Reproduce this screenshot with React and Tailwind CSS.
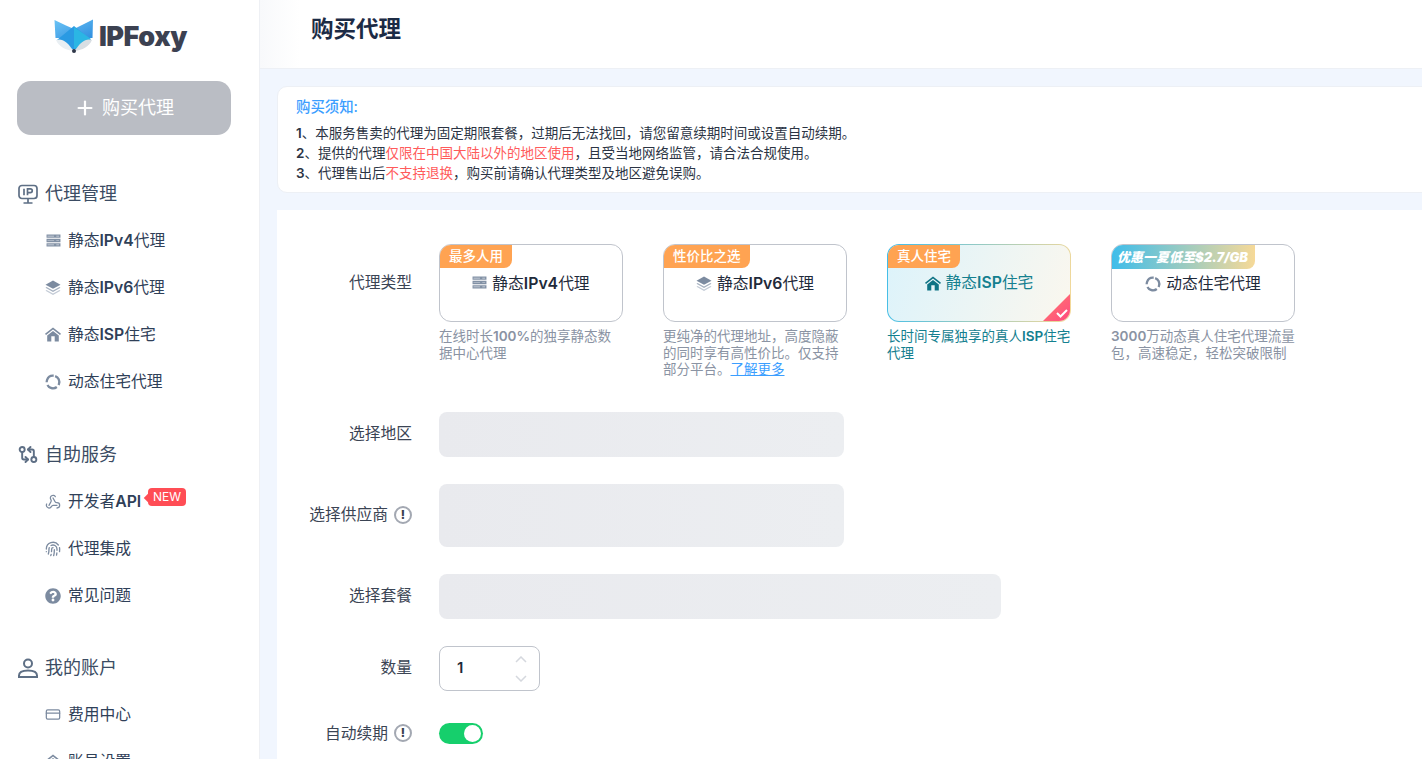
import { CreditCard, Fingerprint, GitCompareArrows, Plus, Webhook } from 'lucide-react'
import { FaQuestionCircle } from 'react-icons/fa'

/* ─── Small drawn icons ──────────────────────────────────────────────────── */
function FoxLogo() {
  return (
    <svg viewBox="0 0 40 35" className="w-10 h-[35px] shrink-0">
      <defs>
        <linearGradient id="ear" x1="0" y1="0" x2="1" y2="1">
          <stop offset="0" stopColor="#6cc4f5" />
          <stop offset="1" stopColor="#2f8fe0" />
        </linearGradient>
      </defs>
      <path d="M0.5 1 L12 6.5 L20 10 L28 6 L39 0.5 L38.5 19 L30 19 L20 12 L10 19 L1.5 19 Z" fill="url(#ear)" />
      <path d="M3 21 L20 7 L37 21 L30 26 L20 31 L10 26 Z" fill="#2a9ae3" />
      <path d="M20 8 L37 20 L30 25 L20 30 Z" fill="#2bb6e4" />
      <path d="M2 21 C8 19 14 23 19 32 C12 31 5 28 2 21 Z" fill="#e9eff3" />
      <path d="M38 21 C32 19 26 23 21 32 C28 31 35 28 38 21 Z" fill="#d8dee3" />
      <circle cx="20" cy="32" r="2" fill="#2f3748" />
    </svg>
  )
}

function ServerIcon() {
  return (
    <svg viewBox="0 0 16 14" className="w-[15px] h-[13px]">
      <path d="M0.5 0.5h15v3.6h-15zM0.5 5.2h15v3.6h-15zM0.5 9.9h15v3.6h-15z" fill="#8291a5" />
      <path d="M1.5 1.9h7v.8h-7zM1.5 6.6h7v.8h-7zM1.5 11.3h7v.8h-7zM11 1.9h3v.8h-3zM11 6.6h3v.8h-3zM11 11.3h3v.8h-3z" fill="#d5dbe3" />
    </svg>
  )
}

function LayersIcon() {
  return (
    <svg viewBox="0 0 16 15" className="w-4 h-[15px]">
      <path d="M8 0.5L15.5 4.7 8 8.8 0.5 4.7z" fill="#7c8ba0" />
      <path d="M1.6 7L0.5 7.7 8 11.9l7.5-4.2L14.4 7 8 10.5z" fill="#a5b0bf" />
      <path d="M1.6 10L0.5 10.7 8 14.9l7.5-4.2L14.4 10 8 13.5z" fill="#c3cbd6" />
    </svg>
  )
}

function HouseIcon({ color = '#7c8ba0' }) {
  return (
    <svg viewBox="0 0 16 15" className="w-4 h-[15px]">
      <path d="M8 0.5L16 6.8 15 8 8 2.6 1 8 0 6.8z" fill={color} />
      <path fillRule="evenodd" d="M8 4L13.8 8.4V14.5H2.2V8.4zM6.3 9.3v5.2h3.4V9.3z" fill={color} />
    </svg>
  )
}

function RingIcon() {
  return (
    <svg viewBox="0 0 16 16" className="w-4 h-4 -rotate-[70deg]" fill="none" stroke="#7c8ba0" strokeWidth="2.3">
      <circle cx="8" cy="8" r="6.3" strokeDasharray="10.6 2.6" />
    </svg>
  )
}

function MonitorIpIcon() {
  return (
    <svg viewBox="0 0 20 20" className="w-5 h-5" fill="none" stroke="currentColor" strokeWidth="1.7">
      <rect x="1" y="1.5" width="18" height="13" rx="3" />
      <path d="M6 4.8v6.4M9.5 11.2V4.8h2.8a1.9 1.9 0 0 1 0 3.9H9.5" />
      <path d="M10 14.5v4M5.5 19h9" />
    </svg>
  )
}

function UserIcon() {
  return (
    <svg viewBox="0 0 20 20" className="w-5 h-5" fill="none" stroke="currentColor" strokeWidth="2">
      <circle cx="10" cy="5.5" r="4" />
      <path d="M1 19v-1.5C1 14.5 4 12.5 10 12.5s9 2 9 5V19z" />
    </svg>
  )
}

function InfoMark() {
  return (
    <span className="w-[18px] h-[18px] rounded-full border-2 border-[#a3a8b2] flex items-center justify-center text-[#39414f] text-xs font-extrabold leading-none shrink-0">
      !
    </span>
  )
}

/* ─── Sidebar ────────────────────────────────────────────────────────────── */
const ip4 = <>静态<b className="font-semibold">IPv4</b>代理</>
const ip6 = <>静态<b className="font-semibold">IPv6</b>代理</>
const isp = <>静态<b className="font-semibold">ISP</b>住宅</>

function NavHead({ icon, children }) {
  return (
    <div className="h-[47px] pt-[2px] flex items-center gap-[7px] pl-[18px] text-lg text-[#3b4c63]">
      <span className="w-5 flex justify-center text-[#5e6f85]">{icon}</span>
      {children}
    </div>
  )
}

function NavItem({ icon, children, badge }) {
  return (
    <div className="relative h-[47px] pt-[2px] flex items-center pl-[45px] text-[15.75px] text-[#2f4058]">
      <span className="w-[16px] mr-[7px] flex justify-center text-[#7c8ba0]">{icon}</span>
      {children}
      {badge && (
        <span className="absolute left-[148px] top-[11px] h-[18px] px-[5px] rounded bg-[#ff4d55] text-white text-xs leading-[18px]">
          NEW
          <i className="absolute -left-[3px] top-[7px] w-[6px] h-[6px] rotate-45 bg-[#ff4d55]" />
        </span>
      )}
    </div>
  )
}

function Sidebar() {
  return (
    <aside className="w-[260px] shrink-0 h-full overflow-hidden bg-white border-r border-[#eef0f4]">
      <div className="h-[81px] flex items-start pt-[19px] pl-[54px] gap-[5px]">
        <FoxLogo />
        <span className="text-[27px] leading-[35px] font-black text-[#3c4151] tracking-[-0.5px]">IPFoxy</span>
      </div>
      <div className="ml-[17px] w-[214px] h-[54px] rounded-[14px] bg-[#babdc4] flex items-center justify-center gap-[6px] text-lg text-white">
        <Plus size={22} strokeWidth={2.4} />
        购买代理
      </div>
      <div className="mt-[34px] mb-[26px]">
        <NavHead icon={<MonitorIpIcon />}>代理管理</NavHead>
        <NavItem icon={<ServerIcon />}>{ip4}</NavItem>
        <NavItem icon={<LayersIcon />}>{ip6}</NavItem>
        <NavItem icon={<HouseIcon />}>{isp}</NavItem>
        <NavItem icon={<RingIcon />}>动态住宅代理</NavItem>
      </div>
      <div className="mb-[25px]">
        <NavHead icon={<GitCompareArrows size={21} strokeWidth={2.3} />}>自助服务</NavHead>
        <NavItem badge icon={<Webhook size={16} strokeWidth={1.9} />}>
          开发者<b className="font-semibold">API</b>
        </NavItem>
        <NavItem icon={<Fingerprint size={16} strokeWidth={2} />}>代理集成</NavItem>
        <NavItem icon={<FaQuestionCircle size={16} />}>常见问题</NavItem>
      </div>
      <NavHead icon={<UserIcon />}>我的账户</NavHead>
      <NavItem icon={<CreditCard size={17} strokeWidth={1.9} />}>费用中心</NavItem>
      <NavItem icon={<HouseIcon />}>账号设置</NavItem>
    </aside>
  )
}

/* ─── Proxy type cards ───────────────────────────────────────────────────── */
function TypeCard({ tag, icon, title, children }) {
  return (
    <div className="w-[184px]">
      <div className="relative h-[78px] rounded-xl border border-[#c0c4cc] bg-white overflow-hidden">
        {tag}
        <div className="h-full pt-[27px] flex justify-center gap-[5px] text-[15.75px] leading-6 text-[#1f2a3a]">
          <span className="mt-[4px]">{icon}</span>
          <span>{title}</span>
        </div>
      </div>
      <p className="mt-[6px] text-[13.5px] leading-[16.5px] text-[#8a93a3]">{children}</p>
    </div>
  )
}

function OrangeTag({ children }) {
  return (
    <div className="absolute left-0 top-0 h-[23px] px-[9px] rounded-br-lg bg-[#ffa352] text-[13.5px] leading-[23px] font-medium text-white">
      {children}
    </div>
  )
}

function Row({ label, info, className = '', children }) {
  return (
    <div className={`flex items-center gap-[27px] ${className}`}>
      <div className="w-[135px] pb-[1px] flex items-center justify-end gap-[6px] text-[15.75px] text-[#3b4454] shrink-0">
        {label}
        {info && <InfoMark />}
      </div>
      {children}
    </div>
  )
}

/* ─── Page ───────────────────────────────────────────────────────────────── */
export default function App() {
  return (
    <div className="h-screen w-full overflow-hidden flex bg-[#f1f6fe] font-[Inter,'Noto_Sans_CJK_SC',sans-serif]">
      <Sidebar />
      <div className="flex-1 min-w-0">
        <header className="h-[69px] bg-white border-b border-[#edf0f5] pl-[51px] flex items-center pb-[11px] bg-[linear-gradient(90deg,#f8f9fb,#ffffff_40px)]">
          <h1 className="text-[22.5px] font-bold text-[#1c2b45]">购买代理</h1>
        </header>

        <div className="pl-[17px] pt-[17px] w-[1200px]">
          <section className="h-[107px] rounded-[10px] border border-[#edf0f5] bg-white pl-[18px] pt-[10px]">
            <h2 className="text-[14.4px] leading-5 font-medium text-[#3b9eff]">购买须知:</h2>
            <div className="mt-[6px] text-[13.5px] leading-5 text-[#2b3444]">
              <p><b className="font-semibold">1</b>、本服务售卖的代理为固定期限套餐，过期后无法找回，请您留意续期时间或设置自动续期。</p>
              <p>
                <b className="font-semibold">2</b>、提供的代理<span className="text-[#ff5b5b]">仅限在中国大陆以外的地区使用</span>，且受当地网络监管，请合法合规使用。
              </p>
              <p>
                <b className="font-semibold">3</b>、代理售出后<span className="text-[#ff5b5b]">不支持退换</span>，购买前请确认代理类型及地区避免误购。
              </p>
            </div>
          </section>

          <section className="mt-[17px] h-[600px] bg-white pt-[34px]">
            <div className="flex gap-[27px]">
              <div className="w-[135px] shrink-0 h-[78px] flex items-center justify-end text-[15.75px] text-[#3b4454]">代理类型</div>
              <div className="flex gap-10">
                <TypeCard tag={<OrangeTag>最多人用</OrangeTag>} icon={<ServerIcon />} title={ip4}>
                  在线时长<b className="font-semibold">100%</b>的独享静态数<br />据中心代理
                </TypeCard>
                <TypeCard tag={<OrangeTag>性价比之选</OrangeTag>} icon={<LayersIcon />} title={ip6}>
                  更纯净的代理地址，高度隐蔽<br />的同时享有高性价比。仅支持<br />部分平台。<a className="text-[#3b9eff] underline">了解更多</a>
                </TypeCard>

                <div className="w-[184px]">
                  <div className="relative h-[78px] rounded-xl p-px bg-[linear-gradient(100deg,#3fbdea,#f6d998)] overflow-hidden">
                    <div className="relative h-full rounded-[11px] bg-[linear-gradient(110deg,#dcf3fb,#fbf7ee)] overflow-hidden">
                      <div className="absolute left-0 top-0 h-[23px] px-[9px] rounded-br-lg bg-[#ffa352] text-[13.5px] leading-[23px] font-medium text-white">
                        真人住宅
                      </div>
                      <div className="h-full pt-[26px] flex justify-center gap-[5px] text-[15.75px] leading-6 text-[#14808f]">
                        <span className="mt-[5px]"><HouseIcon color="#0f7485" /></span>
                        <span>{isp}</span>
                      </div>
                      <div className="absolute right-0 bottom-0 w-[27px] h-[27px] bg-[linear-gradient(135deg,#ff7d6b,#ff4a80)] [clip-path:polygon(100%_0,100%_100%,0_100%)]">
                        <svg viewBox="0 0 12 10" className="absolute right-[2px] bottom-[3px] w-3 h-[10px]" fill="none" stroke="#fff" strokeWidth="2">
                          <path d="M1 5l3.5 3.5L11 2" />
                        </svg>
                      </div>
                    </div>
                  </div>
                  <p className="mt-[6px] text-[13.5px] leading-[16.5px] text-[#14808f]">
                    长时间专属独享的真人<b className="font-semibold">ISP</b>住宅<br />代理
                  </p>
                </div>

                <TypeCard
                  tag={
                    <div className="absolute left-0 top-0 h-6 w-[143px] rounded-br-lg bg-[linear-gradient(90deg,#3fbdea,#f6d998)] text-[13px] leading-6 font-black italic text-white pl-[5px] whitespace-nowrap">
                      优惠一夏低至$2.7/GB
                    </div>
                  }
                  icon={<RingIcon />}
                  title="动态住宅代理"
                >
                  <b className="font-semibold">3000</b>万动态真人住宅代理流量<br />包，高速稳定，轻松突破限制
                </TypeCard>
              </div>
            </div>

            <Row label="选择地区" className="mt-[34px]">
              <div className="w-[405px] h-[45px] rounded-lg bg-[linear-gradient(90deg,#e9eaee,#eceef1)]" />
            </Row>
            <Row label="选择供应商" info className="mt-[27px]">
              <div className="w-[405px] h-[63px] rounded-lg bg-[linear-gradient(90deg,#e9eaee,#eceef1)]" />
            </Row>
            <Row label="选择套餐" className="mt-[27px]">
              <div className="w-[562px] h-[45px] rounded-lg bg-[linear-gradient(90deg,#e9eaee,#eceef1)]" />
            </Row>
            <Row label="数量" className="mt-[27px]">
              <div className="relative w-[101px] h-[45px] rounded-lg border border-[#c0c4cc] flex items-center pl-[17px] text-[15px] font-semibold text-[#1f2a3a]">
                1
                <svg viewBox="0 0 12 26" className="absolute right-[12px] top-[9px] w-3 h-[26px]" fill="none" stroke="#d5d8de" strokeWidth="1.5">
                  <path d="M1 6l5-5 5 5M1 20l5 5 5-5" />
                </svg>
              </div>
            </Row>
            <Row label="自动续期" info className="mt-[31px]">
              <div className="w-[44px] h-[21px] rounded-full bg-[#16cf6c] flex items-center justify-end pr-[2px]">
                <span className="w-[17px] h-[17px] rounded-full bg-white" />
              </div>
            </Row>
          </section>
        </div>
      </div>
    </div>
  )
}
